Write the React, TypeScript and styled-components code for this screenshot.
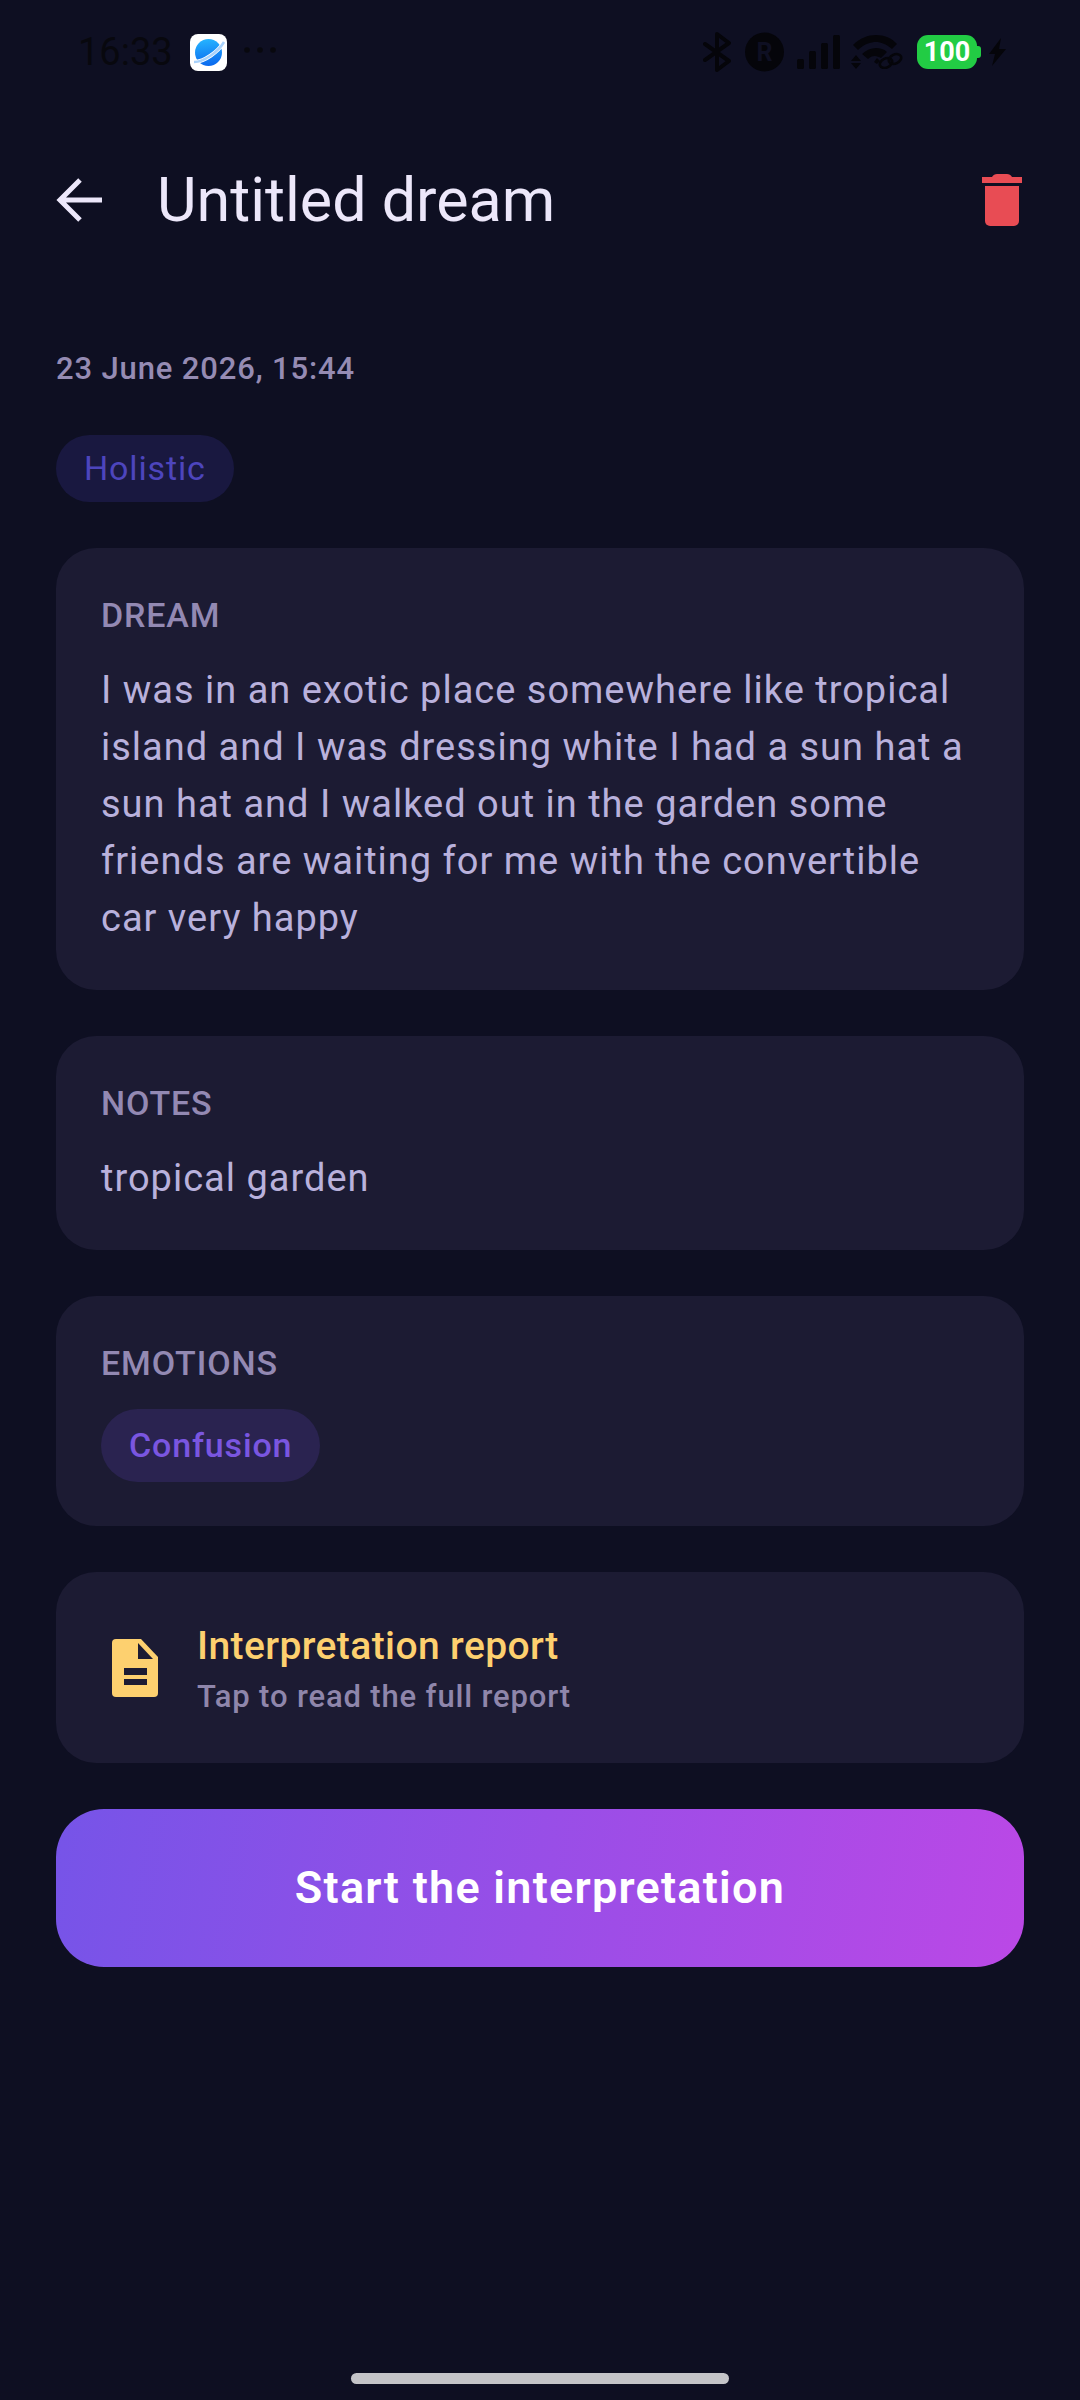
import React from "react";
import styled, { createGlobalStyle } from "styled-components";

const GlobalStyle = createGlobalStyle`
    html, body {
        margin: 0;
        padding: 0;
        background: #0e0f22;
    }
    * {
        box-sizing: border-box;
    }
`;

const Screen = styled.div`
    width: 1080px;
    height: 2400px;
    background: #0e0f22;
    font-family: Roboto, "Liberation Sans", sans-serif;
    display: flex;
    flex-direction: column;
`;

const StatusBar = styled.div`
    height: 154px;
    padding: 30px 74px 0 78px;
    display: flex;
    justify-content: space-between;
    align-items: flex-start;
`;

const StatusLeft = styled.div`
    display: flex;
    align-items: center;
    height: 44px;
`;

const Time = styled.span`
    font-size: 38px;
    color: #08080e;
    line-height: 44px;
`;

const AppIcon = styled.svg`
    width: 37px;
    height: 37px;
    margin-left: 17px;
`;

const Dots = styled.svg`
    width: 32px;
    height: 6px;
    margin: 0 0 4px 17px;
`;

const StatusRight = styled.div`
    display: flex;
    align-items: center;
    height: 44px;
`;

const StatusIcon = styled.svg<{ $gap?: number }>`
    display: block;
    margin-left: ${(p) => p.$gap ?? 0}px;
`;

const Battery = styled.div`
    position: relative;
    width: 60px;
    height: 34px;
    margin-left: 14px;
    border-radius: 11px;
    background: #22cc44;
    color: #fff;
    font-size: 27px;
    font-weight: 700;
    line-height: 34px;
    text-align: center;
    &::after {
        content: "";
        position: absolute;
        right: -4px;
        top: 11px;
        width: 4px;
        height: 12px;
        background: #22cc44;
        border-radius: 0 3px 3px 0;
    }
`;

const Header = styled.div`
    height: 92px;
    padding: 0 58px 0 56px;
    display: flex;
    align-items: center;
`;

const BackIcon = styled.svg`
    width: 46px;
    height: 46px;
    flex: none;
`;

const Title = styled.h1`
    margin: 0 0 0 55px;
    flex: 1;
    font-size: 61px;
    font-weight: 400;
    line-height: 92px;
    color: #ece7fa;
`;

const TrashIcon = styled.svg`
    width: 40px;
    height: 52px;
    flex: none;
`;

const Content = styled.div`
    padding: 0 56px;
    display: flex;
    flex-direction: column;
`;

const DateText = styled.div`
    margin-top: 105px;
    font-size: 31px;
    line-height: 36px;
    font-weight: 500;
    letter-spacing: 0.85px;
    color: #958bb3;
`;

const StylePill = styled.div`
    align-self: flex-start;
    margin-top: 48px;
    height: 67px;
    padding: 0 28px;
    border-radius: 34px;
    background: #191840;
    color: #4d45bd;
    font-size: 34px;
    line-height: 67px;
    letter-spacing: 0.85px;
`;

const Card = styled.section<{ $height: number }>`
    margin-top: 46px;
    height: ${(p) => p.$height}px;
    padding: 49px 45px 0;
    border-radius: 40px;
    background: #1c1b33;
`;

const Label = styled.div`
    font-size: 34px;
    line-height: 36px;
    font-weight: 500;
    letter-spacing: 0.85px;
    color: #9389b3;
`;

const Body = styled.p`
    margin: 29px 0 0;
    font-size: 38px;
    line-height: 57px;
    letter-spacing: 1px;
    color: #b9b1dc;
`;

const EmotionPill = styled.div`
    display: inline-block;
    margin-top: 28px;
    height: 73px;
    padding: 0 28px;
    border-radius: 37px;
    background: #2a2350;
    color: #7a56e0;
    font-size: 34px;
    line-height: 73px;
    font-weight: 500;
    letter-spacing: 0.85px;
`;

const ReportCard = styled.section`
    margin-top: 46px;
    height: 191px;
    padding: 0 56px;
    border-radius: 40px;
    background: #1c1b33;
    display: flex;
    align-items: center;
`;

const ReportIcon = styled.svg`
    width: 46px;
    height: 58px;
    flex: none;
`;

const ReportText = styled.div`
    margin-left: 39px;
    margin-top: 4px;
`;

const ReportTitle = styled.div`
    font-size: 39px;
    line-height: 46px;
    font-weight: 500;
    color: #fdd06f;
    letter-spacing: 0.4px;
`;

const ReportHint = styled.div`
    margin-top: 9px;
    font-size: 31px;
    line-height: 38px;
    font-weight: 500;
    letter-spacing: 0.85px;
    color: #8f86ab;
`;

const StartButton = styled.button`
    margin-top: 46px;
    height: 158px;
    padding: 0 0 2px;
    border: none;
    border-radius: 48px;
    background: linear-gradient(100deg, #7654e8 0%, #bb48e6 100%);
    color: #fff;
    font-family: inherit;
    font-size: 45px;
    font-weight: 600;
    letter-spacing: 1.25px;
`;

const HomeBar = styled.div`
    margin: auto auto 16px;
    width: 378px;
    height: 11px;
    border-radius: 6px;
    background: #c4c4c8;
`;

export default function App() {
    return (
        <Screen>
            <GlobalStyle />
            <StatusBar>
                <StatusLeft>
                    <Time>16:33</Time>
                    <AppIcon viewBox="0 0 37 37">
                        <defs>
                            <linearGradient id="planet" x1="0.4" y1="0" x2="0.5" y2="1">
                                <stop offset="0" stopColor="#26b4ff" />
                                <stop offset="1" stopColor="#0a68ee" />
                            </linearGradient>
                        </defs>
                        <rect width="37" height="37" rx="8" fill="#fff" />
                        <circle cx="18.5" cy="18.5" r="13.5" fill="url(#planet)" />
                        <path d="M4 28C14 28 28 18 34 8" fill="none" stroke="#fff" strokeWidth="4" />
                        <path d="M4 28C14 28 28 18 34 8" fill="none" stroke="#a9d2fb" strokeWidth="2.5" />
                    </AppIcon>
                    <Dots viewBox="0 0 32 6">
                        <circle cx="3" cy="3" r="2.8" fill="#08080e" />
                        <circle cx="16" cy="3" r="2.8" fill="#08080e" />
                        <circle cx="29" cy="3" r="2.8" fill="#08080e" />
                    </Dots>
                </StatusLeft>
                <StatusRight>
                    <StatusIcon width="28" height="40" viewBox="0 0 28 40" fill="none" stroke="#05050a" strokeWidth="4" strokeLinecap="round" strokeLinejoin="round">
                        <path d="M2 12l24 17-12 9V2l12 9L2 28" />
                    </StatusIcon>
                    <StatusIcon $gap={14} width="39" height="40" viewBox="0 0 39 40">
                        <circle cx="19.5" cy="20" r="19.5" fill="#05050a" />
                        <text x="19.5" y="29" textAnchor="middle" fontFamily="Roboto" fontWeight="700" fontSize="25" fill="#0e0f22">R</text>
                    </StatusIcon>
                    <StatusIcon $gap={13} width="43" height="34" viewBox="0 0 43 34" fill="#05050a">
                        <rect x="0" y="24" width="7" height="10" rx="1.5" />
                        <rect x="12" y="16" width="7" height="18" rx="1.5" />
                        <rect x="24" y="8" width="7" height="26" rx="1.5" />
                        <rect x="36" y="0" width="7" height="34" rx="1.5" />
                    </StatusIcon>
                    <StatusIcon $gap={11} width="52" height="34" viewBox="0 0 52 34" fill="#05050a">
                        <path d="M2 10C9 3 17 0 25 0s16 3 21 9l-5 5C35 9 30 7 25 7S13 9 7 15z" />
                        <path d="M11 19c4-4 9-6 14-6 4 0 8 1 11 4l-6 6c-2-1-4-2-6-2-3 0-5 1-7 3z" />
                        <path d="M23 27l3-4 3 3-3 3z" />
                        <path d="M0 26l5-6 5 6zM0 28l5 6 5-6z" />
                        <g fill="none" stroke="#05050a" strokeWidth="2.6">
                            <ellipse cx="35" cy="28" rx="6.5" ry="4.5" transform="rotate(-25 35 28)" />
                            <ellipse cx="44" cy="24" rx="6.5" ry="4.5" transform="rotate(-25 44 24)" />
                        </g>
                    </StatusIcon>
                    <Battery>100</Battery>
                    <StatusIcon $gap={12} width="17" height="28" viewBox="0 0 17 28" fill="#05050a">
                        <path d="M12 0L0 16h6l-3 12 14-17h-7z" />
                    </StatusIcon>
                </StatusRight>
            </StatusBar>
            <Header>
                <BackIcon viewBox="0 0 46 46" fill="none" stroke="#ece7fa" strokeWidth="5">
                    <path d="M24 3L4 23l20 20M4 23h42" />
                </BackIcon>
                <Title>Untitled dream</Title>
                <TrashIcon viewBox="0 0 40 52" fill="#e84c54">
                    <path d="M0 3h10c1-2 3-3 5-3h10c2 0 4 1 5 3h10v6H0z" />
                    <path d="M3 12h34v35a5 5 0 0 1-5 5H8a5 5 0 0 1-5-5z" />
                </TrashIcon>
            </Header>
            <Content>
                <DateText>23 June 2026, 15:44</DateText>
                <StylePill>Holistic</StylePill>
                <Card $height={442}>
                    <Label>DREAM</Label>
                    <Body>
                        I was in an exotic place somewhere like tropical island and I was dressing white I had a sun hat a sun hat and I walked out in the garden some friends are waiting for me with the convertible car very happy
                    </Body>
                </Card>
                <Card $height={214}>
                    <Label>NOTES</Label>
                    <Body>tropical garden</Body>
                </Card>
                <Card $height={230}>
                    <Label>EMOTIONS</Label>
                    <EmotionPill>Confusion</EmotionPill>
                </Card>
                <ReportCard>
                    <ReportIcon viewBox="0 0 46 58">
                        <path d="M4 0h25l17 18v36a4 4 0 0 1-4 4H4a4 4 0 0 1-4-4V4a4 4 0 0 1 4-4z" fill="#fdd06f" />
                        <path d="M26 4v16h15z" fill="#1c1b33" />
                        <path d="M12 29h23v7H12zM12 40h23v6H12z" fill="#1c1b33" />
                    </ReportIcon>
                    <ReportText>
                        <ReportTitle>Interpretation report</ReportTitle>
                        <ReportHint>Tap to read the full report</ReportHint>
                    </ReportText>
                </ReportCard>
                <StartButton>Start the interpretation</StartButton>
            </Content>
            <HomeBar />
        </Screen>
    );
}
